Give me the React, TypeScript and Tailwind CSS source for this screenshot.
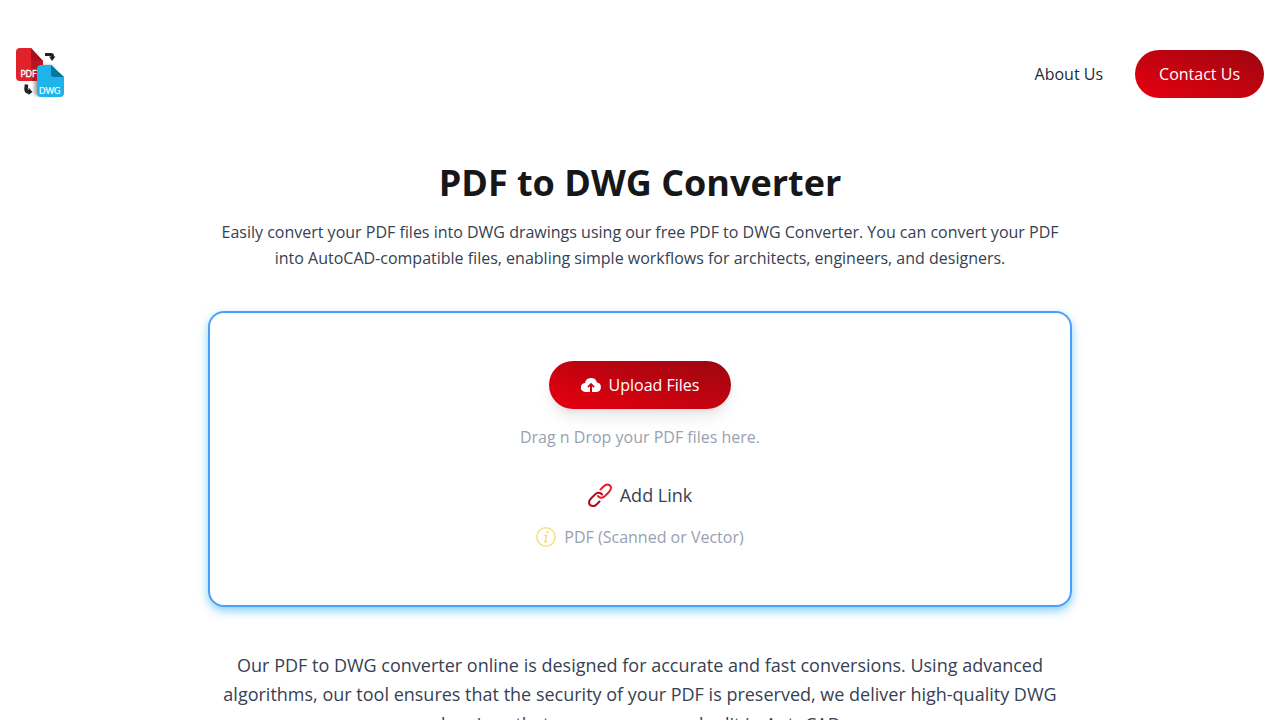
function Logo() {
  return (
    <svg width="48" height="52" viewBox="0 0 48 52" role="img" aria-label="PDF to DWG">
      <defs>
        <filter id="logoShadow" x="-50%" y="-50%" width="200%" height="200%">
          <feGaussianBlur stdDeviation="1.8" />
        </filter>
      </defs>
      <path d="M4 0H15L27 13V29A4 4 0 0 1 23 33H4A4 4 0 0 1 0 29V4A4 4 0 0 1 4 0Z" fill="#e0232b" />
      <path d="M15 0L27 13H18A3 3 0 0 1 15 10Z" fill="#a80f1c" />
      <rect x="18" y="17" width="20" height="31" rx="4" fill="#333" opacity="0.4" filter="url(#logoShadow)" />
      <path d="M15 11L27 13V17H25L21 21V33H16Z" fill="#b01420" opacity="0.8" />
      <text x="4.500" y="29" fontSize="8.5" fill="#fff" stroke="#fff" strokeWidth="0.300" fontFamily="Lato, sans-serif">PDF</text>
      <path d="M25 17H35L48 29V45A4 4 0 0 1 44 49H25A4 4 0 0 1 21 45V21A4 4 0 0 1 25 17Z" fill="#1cb4ea" />
      <path d="M35 17L48 29H38A3 3 0 0 1 35 26Z" fill="#08759c" />
      <text x="23" y="45.500" fontSize="8.5" fill="#fff" stroke="#fff" strokeWidth="0.200" fontFamily="Lato, sans-serif">DWG</text>
      <path d="M29 6.500H35Q36.500 6.500 36.500 8V10" fill="none" stroke="#222" strokeWidth="3" />
      <path d="M33 8.500H39.500L36 13Z" fill="#222" />
      <path d="M10.500 36.500L10 41Q10 44 13 44" fill="none" stroke="#222" strokeWidth="3.500" />
      <path d="M12.500 39.500L16.500 44L12.500 47Z" fill="#222" />
    </svg>
  );
}

function CloudIcon() {
  return (
    <svg width="20" height="16" viewBox="0 0 20 16" fill="currentColor" aria-hidden="true">
      <path d="M9 15H4.500A4.500 4.500 0 0 1 4 6A6.200 6.200 0 0 1 16 5.500A4.800 4.800 0 0 1 15.500 15H11V9.200L12.500 10.700L13.700 9.500L10 5.800L6.300 9.500L7.500 10.700L9 9.200Z" />
    </svg>
  );
}

function LinkIcon() {
  return (
    <svg width="24" height="24" viewBox="0 0 24 24" fill="none" strokeWidth="2" strokeLinecap="round" aria-hidden="true">
      <path d="M12.500 6.500L15.500 3.500Q17.500 1.500 19.500 1.500Q23 2 23 5Q23 7 21 9L17 13Q14.500 15.500 12 14.500Q10.500 14 10 13" stroke="#e5202a" />
      <path d="M11.500 18.500L8.500 21.500Q6.500 23.500 4.500 23Q1 22.500 1 19.500Q1 17.500 3 15.500L7 11.500Q9.500 9 12 10Q13.500 10.500 14 11.500" stroke="#b5081b" />
    </svg>
  );
}

function InfoIcon() {
  return (
    <svg width="20" height="20" viewBox="0 0 20 20" fill="none" stroke="#fbdf83" strokeLinecap="round" strokeLinejoin="round" aria-hidden="true">
      <circle cx="10" cy="10" r="9.200" strokeWidth="1.600" />
      <path d="M8.500 8.500H10.800L9 14.500Q9 15.800 10.800 14.500" strokeWidth="1.600" />
      <circle cx="11.300" cy="5.200" r="0.800" fill="#fbdf83" />
    </svg>
  );
}

export default function App() {
  return (
    <div className="min-h-screen bg-white font-['Open_Sans',sans-serif] text-base text-gray-700">
      <header className="flex items-center justify-between px-4 pt-12 pb-[47px]">
        <a href="#home">
          <Logo />
        </a>
        <nav className="flex items-center gap-8">
          <a href="#about" className="text-gray-800">About Us</a>
          <a
            href="#contact"
            className="rounded-full bg-[linear-gradient(to_top_right,#e1000f_10%,#9b0711_100%)] px-6 py-3 text-white"
          >
            Contact Us
          </a>
        </nav>
      </header>

      <main className="mx-auto max-w-4xl px-4 pt-4 pb-12 text-center">
        <h1 className="text-4xl font-bold text-[#151719]">PDF to DWG Converter</h1>
        <p className="mt-4 leading-relaxed">
          Easily convert your PDF files into DWG drawings using our free PDF to DWG Converter. You can convert your PDF
          into AutoCAD-compatible files, enabling simple workflows for architects, engineers, and designers.
        </p>

        <section className="mt-10 flex flex-col items-center rounded-2xl border-2 border-[#4a9eff] bg-white px-8 pt-12 pb-14 shadow-[0_4px_10px_rgba(14,165,233,0.5)]">
          <button
            type="button"
            className="flex items-center gap-2 rounded-full bg-[linear-gradient(to_top_right,#e1000f_10%,#9b0711_100%)] px-8 py-3 text-white shadow-lg"
          >
            <CloudIcon />
            Upload Files
          </button>
          <p className="mt-4 text-gray-400">Drag n Drop your PDF files here.</p>
          <button type="button" className="mt-8 flex items-center gap-2 text-lg">
            <LinkIcon />
            Add Link
          </button>
          <div className="mt-4 flex items-center gap-2 text-gray-400">
            <InfoIcon />
            <span>PDF (Scanned or Vector)</span>
          </div>
        </section>

        <p className="mt-11 text-lg leading-relaxed">
          Our PDF to DWG converter online is designed for accurate and fast conversions. Using advanced algorithms, our
          tool ensures that the security of your PDF is preserved, we deliver high-quality DWG drawings that you can
          open and edit in AutoCAD.
        </p>
      </main>
    </div>
  );
}
